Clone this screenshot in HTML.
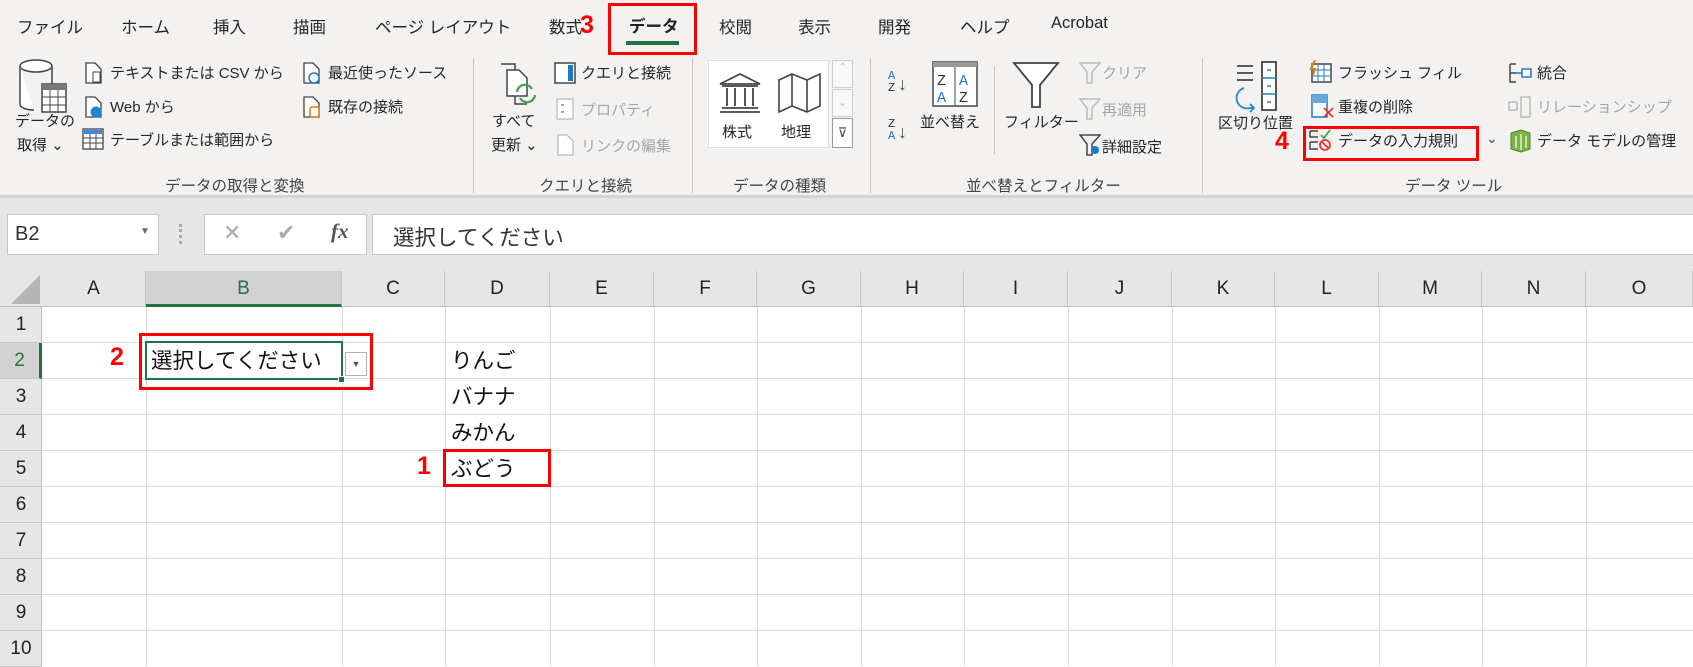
<!DOCTYPE html>
<html><head><meta charset="utf-8"><style>
*{margin:0;padding:0;box-sizing:border-box}
body{width:1693px;height:666px;overflow:hidden;background:#fff;font-family:"Liberation Sans","Noto Sans CJK JP",sans-serif;color:#262626;position:relative}
.a{position:absolute;white-space:nowrap}
.t{font-size:15px;color:#262626}
.tb{font-size:16.5px;color:#262626}
.g{color:#a6a6a6}
.lab{font-size:15.5px;color:#444}
.sep{position:absolute;width:1px;background:#c8c6c4;top:58px;height:135px}
.red{position:absolute;border:3px solid #f00}
.rn{position:absolute;color:#f00;font-weight:bold;font-size:25px;font-family:"Liberation Sans",sans-serif}
.ch{position:absolute;top:271px;height:36px;font-size:19px;text-align:center;line-height:36px;border-right:1px solid #c8c8c8;color:#222}
.rh{position:absolute;left:0;width:42px;font-size:19px;text-align:center;border-bottom:1px solid #c8c8c8;color:#222}
.vl{position:absolute;top:307px;bottom:0;width:1px;background:#d9d9d9}
.hl{position:absolute;left:42px;right:0;height:1px;background:#d9d9d9}
.ct{position:absolute;font-size:21.5px;color:#111}
</style></head><body>
<div class="a" style="left:0;top:0;width:1693px;height:195px;background:#f3f2f1"></div>
<div class="a" style="left:0;top:195px;width:1693px;height:3px;background:#d6d4d2"></div>
<div class="a" style="left:0;top:198px;width:1693px;height:73px;background:#e6e6e6"></div>
<div class="a tb" style="top:14px;left:17px">ファイル</div>
<div class="a tb" style="top:14px;left:121px">ホーム</div>
<div class="a tb" style="top:14px;left:213px">挿入</div>
<div class="a tb" style="top:14px;left:293px">描画</div>
<div class="a tb" style="top:14px;left:375px">ページ レイアウト</div>
<div class="a tb" style="top:14px;left:549px">数式</div>
<div class="rn" style="top:11px;left:580px">3</div>
<div class="a tb" style="top:13px;left:629px;font-weight:bold;color:#222">データ</div>
<div class="a" style="left:626px;top:41px;width:53px;height:4px;background:#217346"></div>
<div class="red" style="left:608px;top:3px;width:89px;height:52px"></div>
<div class="a tb" style="top:14px;left:719px">校閲</div>
<div class="a tb" style="top:14px;left:798px">表示</div>
<div class="a tb" style="top:14px;left:878px">開発</div>
<div class="a tb" style="top:14px;left:960px">ヘルプ</div>
<div class="a tb" style="top:14px;left:1051px">Acrobat</div>

<svg class="a" style="left:16px;top:58px" width="56" height="58"><ellipse cx="20" cy="8" rx="16" ry="6" fill="#fff" stroke="#444" stroke-width="1.5"/><path d="M4 8v38c0 4 7 6 14 6M36 8v18" fill="#fff" stroke="#444" stroke-width="1.5"/><rect x="26" y="26" width="24" height="28" fill="#fff" stroke="#444" stroke-width="1.5"/><rect x="26" y="26" width="24" height="6" fill="#777"/><path d="M26 39h24M26 47h24M34 32v22M42 32v22" stroke="#444"/></svg>
<div class="a t" style="left:15px;top:110px">データの</div>
<div class="a t" style="left:17px;top:134px">取得 ⌄</div>
<svg class="a" style="left:84px;top:62px" width="20" height="22"><path d="M2 1h9l6 6v14H2z" fill="#fff" stroke="#444" stroke-width="1.3"/><rect x="9" y="10" width="7" height="10" fill="#fff" stroke="#444"/></svg>
<div class="a t" style="left:110px;top:62px">テキストまたは CSV から</div>
<svg class="a" style="left:84px;top:96px" width="20" height="22"><path d="M2 1h9l6 6v14H2z" fill="#fff" stroke="#444" stroke-width="1.3"/><circle cx="12" cy="16" r="5.5" fill="#1e88d8"/></svg>
<div class="a t" style="left:110px;top:96px">Web から</div>
<svg class="a" style="left:82px;top:128px" width="22" height="22"><rect x="1" y="1" width="20" height="20" fill="#fff" stroke="#444" stroke-width="1.3"/><rect x="2" y="2" width="18" height="4" fill="#3c8ad6"/><path d="M1 10h20M1 15h20M8 6v15M14 6v15" stroke="#444"/></svg>
<div class="a t" style="left:110px;top:129px">テーブルまたは範囲から</div>
<svg class="a" style="left:302px;top:62px" width="20" height="22"><path d="M2 1h9l6 6v14H2z" fill="#fff" stroke="#444" stroke-width="1.3"/><circle cx="12" cy="16" r="5" fill="#fff" stroke="#1e78c8" stroke-width="1.5"/></svg>
<div class="a t" style="left:328px;top:62px">最近使ったソース</div>
<svg class="a" style="left:302px;top:96px" width="20" height="22"><path d="M2 1h9l6 6v14H2z" fill="#fff" stroke="#444" stroke-width="1.3"/><rect x="8" y="11" width="9" height="10" rx="2" fill="#fff" stroke="#e07b14" stroke-width="1.5"/></svg>
<div class="a t" style="left:328px;top:96px">既存の接続</div>
<div class="a lab" style="left:165px;top:174px">データの取得と変換</div>
<div class="sep" style="left:473px"></div>

<svg class="a" style="left:499px;top:62px" width="44" height="48"><path d="M2 2h14v40h12" fill="none" stroke="#444" stroke-width="1.5"/><path d="M8 8h12l8 8v18H8z" fill="#fff" stroke="#444" stroke-width="1.5"/><path d="M18 30a8 8 0 0 1 15-3M36 33a8 8 0 0 1-15 3" fill="none" stroke="#3aa54a" stroke-width="2.2"/></svg>
<div class="a t" style="left:492px;top:110px">すべて</div>
<div class="a t" style="left:491px;top:134px">更新 ⌄</div>
<svg class="a" style="left:554px;top:62px" width="22" height="22"><rect x="1" y="1" width="20" height="20" fill="#fff" stroke="#444" stroke-width="1.5"/><rect x="14" y="3" width="5" height="16" fill="#1e78c8"/></svg>
<div class="a t" style="left:581px;top:62px">クエリと接続</div>
<svg class="a" style="left:556px;top:98px" width="18" height="22"><rect x="1" y="1" width="16" height="20" fill="#fff" stroke="#bbb" stroke-width="1.3"/><path d="M5 7h3M5 14h3" stroke="#aaa" stroke-width="2"/></svg>
<div class="a t g" style="left:581px;top:99px">プロパティ</div>
<svg class="a" style="left:556px;top:134px" width="20" height="22"><path d="M2 1h9l6 6v14H2z" fill="#fff" stroke="#bbb" stroke-width="1.3"/></svg>
<div class="a t g" style="left:581px;top:135px">リンクの編集</div>
<div class="a lab" style="left:539px;top:174px">クエリと接続</div>
<div class="sep" style="left:692px"></div>

<div class="a" style="left:708px;top:60px;width:121px;height:88px;background:#fff;border:1px solid #e1dfdd"></div>
<svg class="a" style="left:717px;top:72px" width="46" height="42"><path d="M3 12L23 2l20 10z" fill="#fff" stroke="#444" stroke-width="1.8"/><path d="M5 14h36M5 36h36M3 40h40M10 16v18M18 16v18M28 16v18M36 16v18" stroke="#444" stroke-width="1.8"/></svg>
<svg class="a" style="left:777px;top:72px" width="46" height="42"><path d="M2 8l13-6 15 6 13-6v32l-13 6-15-6-13 6zM15 2v32M30 8v32" fill="#fff" stroke="#444" stroke-width="1.6"/></svg>
<div class="a t" style="left:722px;top:121px">株式</div>
<div class="a t" style="left:781px;top:121px">地理</div>
<div class="a" style="left:832px;top:60px;width:21px;height:28px;border:1px solid #d0d0d0;background:#f8f8f8;font-size:11px;color:#bbb;text-align:center">⌃</div>
<div class="a" style="left:832px;top:89px;width:21px;height:28px;border:1px solid #d0d0d0;background:#f8f8f8;font-size:11px;color:#bbb;text-align:center;line-height:26px">⌄</div>
<div class="a" style="left:832px;top:118px;width:21px;height:30px;border:1px solid #999;background:#fff;font-size:13px;color:#444;text-align:center;line-height:28px">⊽</div>
<div class="a lab" style="left:733px;top:174px">データの種類</div>
<div class="sep" style="left:870px"></div>

<div class="a" style="left:888px;top:70px;font-size:12px;line-height:12px;color:#1e78c8;font-family:'Liberation Mono',monospace">A<br><span style="color:#333">Z</span></div>
<div class="a" style="left:898px;top:74px;font-size:18px;color:#444">↓</div>
<div class="a" style="left:888px;top:118px;font-size:12px;line-height:12px;color:#333;font-family:'Liberation Mono',monospace">Z<br><span style="color:#1e78c8">A</span></div>
<div class="a" style="left:898px;top:122px;font-size:18px;color:#444">↓</div>
<svg class="a" style="left:932px;top:61px" width="46" height="46"><rect x="1" y="1" width="44" height="44" fill="#fff" stroke="#444" stroke-width="1.5"/><rect x="1" y="1" width="44" height="5" fill="#999"/><path d="M23 6v39" stroke="#444"/><text x="5" y="24" font-size="15" font-family="Liberation Mono" fill="#333">Z</text><text x="5" y="41" font-size="15" font-family="Liberation Mono" fill="#1e78c8">A</text><text x="27" y="24" font-size="15" font-family="Liberation Mono" fill="#1e78c8">A</text><text x="27" y="41" font-size="15" font-family="Liberation Mono" fill="#333">Z</text></svg>
<div class="a t" style="left:920px;top:111px">並べ替え</div>
<div class="a" style="left:994px;top:66px;width:1px;height:88px;background:#c8c6c4"></div>
<svg class="a" style="left:1012px;top:61px" width="48" height="48"><path d="M2 2h44L28 24v22h-8V24z" fill="#fff" stroke="#444" stroke-width="1.8"/></svg>
<div class="a t" style="left:1004px;top:111px">フィルター</div>
<svg class="a" style="left:1079px;top:62px" width="22" height="22"><path d="M1 1h20l-8 9v11h-5V10z" fill="none" stroke="#bbb" stroke-width="1.5"/></svg>
<div class="a t g" style="left:1102px;top:62px">クリア</div>
<svg class="a" style="left:1079px;top:98px" width="22" height="22"><path d="M1 1h20l-8 9v11h-5V10z" fill="none" stroke="#bbb" stroke-width="1.5"/></svg>
<div class="a t g" style="left:1102px;top:99px">再適用</div>
<svg class="a" style="left:1079px;top:134px" width="22" height="22"><path d="M1 1h20l-8 9v11h-5V10z" fill="none" stroke="#444" stroke-width="1.5"/><circle cx="16" cy="16" r="4" fill="#1e78c8"/></svg>
<div class="a t" style="left:1102px;top:136px">詳細設定</div>
<div class="a lab" style="left:966px;top:174px">並べ替えとフィルター</div>
<div class="sep" style="left:1202px"></div>

<svg class="a" style="left:1234px;top:60px" width="52" height="56"><path d="M3 6h16M3 13h16M3 20h16" stroke="#444" stroke-width="1.8"/><rect x="28" y="2" width="14" height="48" fill="#fff" stroke="#444" stroke-width="1.8"/><path d="M28 18h14M28 34h14M33 10h4M33 26h4M33 42h4" stroke="#1e78c8" stroke-width="1.6"/><path d="M10 28a10 10 0 0 0 6 20l4 0M16 44l4 4-4 4" fill="none" stroke="#1e88d8" stroke-width="1.8"/></svg>
<div class="a t" style="left:1218px;top:112px">区切り位置</div>
<svg class="a" style="left:1309px;top:60px" width="24" height="24"><rect x="3" y="4" width="19" height="18" fill="#fff" stroke="#444" stroke-width="1.5"/><path d="M3 10h19M3 16h19M9 4v18M15 4v18" stroke="#1e78c8"/><path d="M6 0l-4 9h4l-2 6" stroke="#e07b14" stroke-width="2" fill="none"/></svg>
<div class="a t" style="left:1338px;top:62px">フラッシュ フィル</div>
<svg class="a" style="left:1311px;top:94px" width="24" height="26"><rect x="1" y="1" width="15" height="22" fill="#fff" stroke="#1e78c8" stroke-width="1.5"/><rect x="1" y="1" width="15" height="8" fill="#6aa8e0"/><path d="M13 14l9 9M22 14l-9 9" stroke="#e33" stroke-width="1.8"/></svg>
<div class="a t" style="left:1338px;top:96px">重複の削除</div>
<svg class="a" style="left:1308px;top:128px" width="24" height="24"><path d="M2 3h8M2 3v6h8M2 14h8M2 14v7h8" stroke="#444" stroke-width="1.5" fill="none"/><path d="M13 7l3 3 6-8" stroke="#3aa54a" stroke-width="1.8" fill="none"/><circle cx="17" cy="17" r="5" fill="none" stroke="#e33" stroke-width="1.8"/><path d="M14 14l6 6" stroke="#e33" stroke-width="1.8"/></svg>
<div class="a t" style="left:1338px;top:130px">データの入力規則</div>
<div class="red" style="left:1303px;top:126px;width:176px;height:35px"></div>
<div class="rn" style="left:1275px;top:127px">4</div>
<div class="a" style="left:1486px;top:130px;font-size:14px;color:#444">⌄</div>
<svg class="a" style="left:1508px;top:62px" width="24" height="22"><path d="M2 2h6M2 2v18h6M2 11h6" stroke="#444" stroke-width="1.5" fill="none"/><path d="M8 11h6" stroke="#1e78c8" stroke-width="1.5"/><rect x="14" y="7" width="9" height="8" fill="#fff" stroke="#1e78c8" stroke-width="1.5"/></svg>
<div class="a t" style="left:1537px;top:62px">統合</div>
<svg class="a" style="left:1508px;top:96px" width="24" height="22"><rect x="1" y="6" width="8" height="8" fill="none" stroke="#bbb" stroke-width="1.5"/><rect x="13" y="1" width="9" height="20" fill="none" stroke="#bbb" stroke-width="1.5"/></svg>
<div class="a t g" style="left:1537px;top:96px">リレーションシップ</div>
<svg class="a" style="left:1509px;top:129px" width="22" height="24"><path d="M2 4l10-3 9 3v16l-9 3-10-3z" fill="#7cb342" stroke="#4a8a2a"/><path d="M7 7v12M12 5v16M17 7v12" stroke="#fff" stroke-width="1.2"/></svg>
<div class="a t" style="left:1537px;top:130px">データ モデルの管理</div>
<div class="a lab" style="left:1405px;top:174px">データ ツール</div>

<div class="a" style="left:7px;top:214px;width:152px;height:41px;background:#fff;border:1px solid #c6c6c6"></div>
<div class="a" style="left:15px;top:223px;font-size:20px;color:#333">B2</div>
<div class="a" style="left:140px;top:226px;font-size:10px;color:#666">▼</div>
<div class="a" style="left:179px;top:224px;width:3px;height:20px;border-left:3px dotted #aaa"></div>
<div class="a" style="left:204px;top:214px;width:163px;height:41px;background:#fff;border:1px solid #c6c6c6"></div>
<div class="a" style="left:223px;top:220px;font-size:22px;color:#aaa">✕</div>
<div class="a" style="left:277px;top:220px;font-size:22px;color:#aaa">✔</div>
<div class="a" style="left:331px;top:219px;font-size:21px;color:#555;font-family:'Liberation Serif',serif;font-style:italic;font-weight:bold">fx</div>
<div class="a" style="left:372px;top:214px;width:1330px;height:41px;background:#fff;border:1px solid #c6c6c6"></div>
<div class="a" style="left:393px;top:221px;font-size:21.5px;color:#333">選択してください</div>

<div class="a" style="left:0;top:271px;width:1693px;height:36px;background:#e6e6e6;border-bottom:1px solid #bfbfbf"></div>
<div class="a" style="left:0;top:307px;width:42px;height:359px;background:#e6e6e6;border-right:1px solid #bfbfbf"></div>
<svg class="a" style="left:11px;top:275px" width="30" height="30"><path d="M29 0v29H0z" fill="#b4b4b4"/></svg>
<div class="ch" style="left:42px;width:104px">A</div>
<div class="ch" style="left:146px;width:196px;background:#d2d2d2;color:#217346;border-bottom:3px solid #217346;height:36px">B</div>
<div class="ch" style="left:342px;width:103px">C</div>
<div class="ch" style="left:445px;width:105px">D</div>
<div class="ch" style="left:550px;width:104px">E</div>
<div class="ch" style="left:654px;width:103px">F</div>
<div class="ch" style="left:757px;width:104px">G</div>
<div class="ch" style="left:861px;width:103px">H</div>
<div class="ch" style="left:964px;width:104px">I</div>
<div class="ch" style="left:1068px;width:104px">J</div>
<div class="ch" style="left:1172px;width:103px">K</div>
<div class="ch" style="left:1275px;width:104px">L</div>
<div class="ch" style="left:1379px;width:103px">M</div>
<div class="ch" style="left:1482px;width:104px">N</div>
<div class="ch" style="left:1586px;width:107px">O</div>

<div class="rh" style="top:307px;height:36px;line-height:36px">1</div>
<div class="rh" style="top:343px;height:36px;line-height:36px;background:#d2d2d2;color:#217346;border-right:3px solid #217346">2</div>
<div class="rh" style="top:379px;height:36px;line-height:36px">3</div>
<div class="rh" style="top:415px;height:36px;line-height:36px">4</div>
<div class="rh" style="top:451px;height:36px;line-height:36px">5</div>
<div class="rh" style="top:487px;height:36px;line-height:36px">6</div>
<div class="rh" style="top:523px;height:36px;line-height:36px">7</div>
<div class="rh" style="top:559px;height:36px;line-height:36px">8</div>
<div class="rh" style="top:595px;height:36px;line-height:36px">9</div>
<div class="rh" style="top:631px;height:36px;line-height:36px">10</div>

<div class="vl" style="left:146px"></div><div class="vl" style="left:342px"></div><div class="vl" style="left:445px"></div><div class="vl" style="left:550px"></div><div class="vl" style="left:654px"></div><div class="vl" style="left:757px"></div><div class="vl" style="left:861px"></div><div class="vl" style="left:964px"></div><div class="vl" style="left:1068px"></div><div class="vl" style="left:1172px"></div><div class="vl" style="left:1275px"></div><div class="vl" style="left:1379px"></div><div class="vl" style="left:1482px"></div><div class="vl" style="left:1586px"></div>
<div class="hl" style="top:342px"></div><div class="hl" style="top:378px"></div><div class="hl" style="top:414px"></div><div class="hl" style="top:450px"></div><div class="hl" style="top:486px"></div><div class="hl" style="top:522px"></div><div class="hl" style="top:558px"></div><div class="hl" style="top:594px"></div><div class="hl" style="top:630px"></div>

<div class="a" style="left:145px;top:341px;width:198px;height:39px;border:2px solid #217346"></div>
<div class="a" style="left:338px;top:376px;width:7px;height:7px;background:#217346;border:1px solid #fff"></div>
<div class="ct" style="left:151px;top:344px">選択してください</div>
<div class="a" style="left:345px;top:352px;width:22px;height:24px;background:#fff;border:1px solid #b0b0b0;font-size:9px;color:#555;text-align:center;line-height:22px">▼</div>
<div class="red" style="left:139px;top:333px;width:234px;height:57px"></div>
<div class="rn" style="left:110px;top:343px">2</div>
<div class="ct" style="left:451px;top:344px">りんご</div>
<div class="ct" style="left:451px;top:380px">バナナ</div>
<div class="ct" style="left:451px;top:416px">みかん</div>
<div class="ct" style="left:451px;top:452px">ぶどう</div>
<div class="red" style="left:443px;top:449px;width:108px;height:38px"></div>
<div class="rn" style="left:417px;top:452px">1</div>
</body></html>
